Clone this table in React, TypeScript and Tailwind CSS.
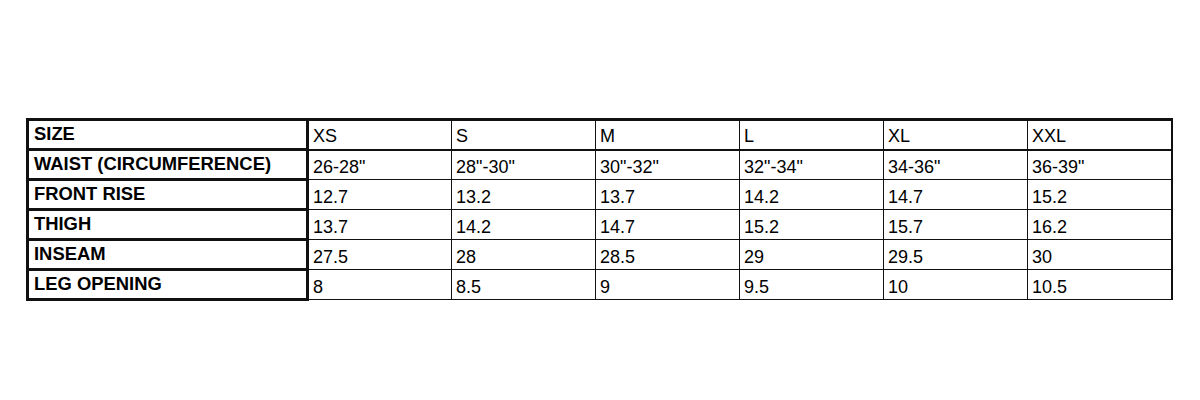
const columns = ["XS", "S", "M", "L", "XL", "XXL"];

const rows: { label: string; values: string[] }[] = [
  { label: "WAIST (CIRCUMFERENCE)", values: ['26-28"', '28"-30"', '30"-32"', '32"-34"', '34-36"', '36-39"'] },
  { label: "FRONT RISE", values: ["12.7", "13.2", "13.7", "14.2", "14.7", "15.2"] },
  { label: "THIGH", values: ["13.7", "14.2", "14.7", "15.2", "15.7", "16.2"] },
  { label: "INSEAM", values: ["27.5", "28", "28.5", "29", "29.5", "30"] },
  { label: "LEG OPENING", values: ["8", "8.5", "9", "9.5", "10", "10.5"] },
];

export default function App() {
  return (
    <div className="w-[1200px] h-[400px] bg-white pt-[118px] pl-[26px] font-['Liberation_Sans',Arial,sans-serif] text-[18px] text-black">
      <table className="table-fixed border-collapse w-[1145px]">
        <colgroup>
          <col className="w-[280px]" />
          {columns.map((c) => (
            <col key={c} className="w-[144px]" />
          ))}
        </colgroup>
        <tbody>
          <tr className="h-[30px]">
            <td className="border-[3px] border-[#111] pl-[5px] pb-[1px] text-[18.4px] font-bold leading-none align-middle">SIZE</td>
            {columns.map((c, i) => (
              <td
                key={c}
                className={`border border-t-[3px] border-b-2 border-[#111] pl-[4px] pt-[2px] leading-none align-middle ${i === columns.length - 1 ? "border-r-2" : ""}`}
              >
                {c}
              </td>
            ))}
          </tr>
          {rows.map((r) => (
            <tr key={r.label} className="h-[30px]">
              <td className="border-[3px] border-[#111] pl-[5px] pb-[1px] text-[18.4px] font-bold leading-none align-middle">
                {r.label}
              </td>
              {r.values.map((v, i) => (
                <td
                  key={i}
                  className={`border border-[#111] pl-[4px] pt-[4px] leading-none align-middle ${i === r.values.length - 1 ? "border-r-2" : ""}`}
                >
                  {v}
                </td>
              ))}
            </tr>
          ))}
        </tbody>
      </table>
    </div>
  );
}
